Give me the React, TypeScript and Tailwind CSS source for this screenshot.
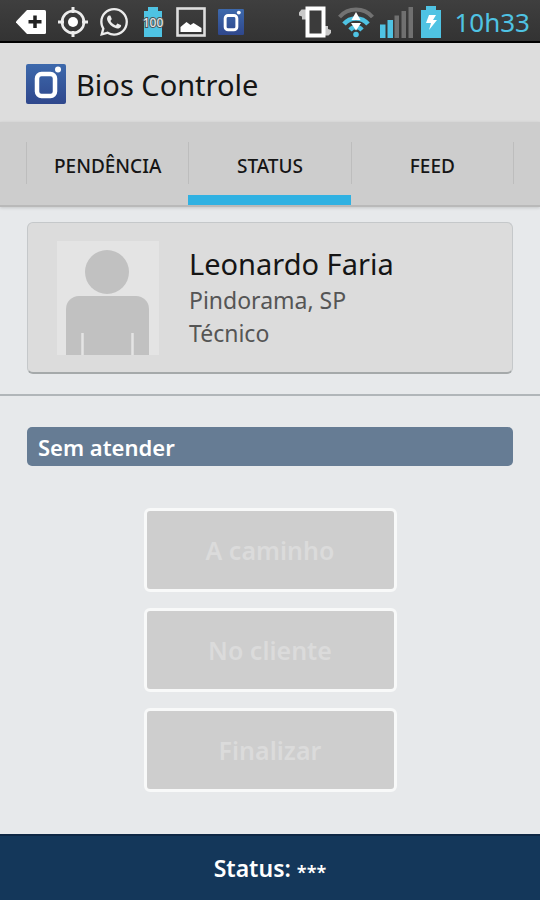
import React from "react";

function TagIcon() {
  return (
    <svg width="30" height="28" viewBox="0 0 30 28" aria-hidden="true">
      <path d="M11 2h17.500a1.500 1.500 0 0 1 1.500 1.500v21a1.500 1.500 0 0 1-1.500 1.500H11L0 14.500v-1z" fill="#fff" />
      <path d="M19 7.500v12.500M12.500 13.700h13" stroke="#222" strokeWidth="3.500" />
    </svg>
  );
}

function TargetIcon() {
  return (
    <svg width="30" height="32" viewBox="0 0 30 32" fill="none" stroke="#ececec" aria-hidden="true">
      <circle cx="15" cy="16" r="11" strokeWidth="2.600" />
      <circle cx="15" cy="16" r="5" fill="#fff" stroke="none" />
      <path d="M15 1v6M15 25v6M0 16h6M24 16h6" strokeWidth="3" />
    </svg>
  );
}

function ChatIcon() {
  return (
    <svg width="28" height="28" viewBox="0 0 24 24" aria-hidden="true">
      <path
        fill="#ececec"
        d="M17.472 14.382c-.297-.149-1.758-.867-2.030-.967-.273-.099-.471-.148-.670.150-.197.297-.767.966-.940 1.164-.173.199-.347.223-.644.075-.297-.150-1.255-.463-2.390-1.475-.883-.788-1.480-1.761-1.653-2.059-.173-.297-.018-.458.130-.606.134-.133.298-.347.446-.520.149-.174.198-.298.298-.497.099-.198.050-.371-.025-.520-.075-.149-.669-1.612-.916-2.207-.242-.579-.487-.500-.669-.510-.173-.008-.371-.010-.570-.010-.198 0-.520.074-.792.372-.272.297-1.040 1.016-1.040 2.479 0 1.462 1.065 2.875 1.213 3.074.149.198 2.096 3.200 5.077 4.487.709.306 1.262.489 1.694.625.712.227 1.360.195 1.871.118.571-.085 1.758-.719 2.006-1.413.248-.694.248-1.289.173-1.413-.074-.124-.272-.198-.570-.347m-5.421 7.403h-.004a9.870 9.870 0 0 1-5.031-1.378l-.361-.214-3.741.982.998-3.648-.235-.374a9.860 9.860 0 0 1-1.510-5.260c.001-5.450 4.436-9.884 9.888-9.884 2.640 0 5.122 1.030 6.988 2.898a9.825 9.825 0 0 1 2.893 6.994c-.003 5.450-4.437 9.884-9.885 9.884m8.413-18.297A11.815 11.815 0 0 0 12.050 0C5.495 0 .160 5.335.157 11.892c0 2.096.547 4.142 1.588 5.945L.057 24l6.305-1.654a11.882 11.882 0 0 0 5.683 1.448h.005c6.554 0 11.890-5.335 11.893-11.893a11.821 11.821 0 0 0-3.480-8.413Z"
      />
    </svg>
  );
}

function BatteryLevelIcon() {
  return (
    <svg width="22" height="32" viewBox="0 0 22 32" aria-hidden="true">
      <path d="M6 1h10v4h4v26H2V5h4z" fill="#4fc3e3" />
      <text x="11" y="21" textAnchor="middle" fontSize="12" fontWeight="500" fontFamily="Noto Sans, sans-serif" fill="#e4e4e4" stroke="#4a5558" strokeWidth="2" paintOrder="stroke">
        100
      </text>
    </svg>
  );
}

function PictureIcon() {
  return (
    <svg width="30" height="30" viewBox="0 0 30 30" aria-hidden="true">
      <rect x="1.500" y="1.500" width="27" height="27" fill="none" stroke="#dedede" strokeWidth="2.600" />
      <path d="M4.500 25v-5l6-5 4 3 3-2 8 5v4z" fill="#fff" />
    </svg>
  );
}

function AppLogo({ className }: { className: string }) {
  return (
    <svg className={className} viewBox="0 0 40 40" aria-hidden="true">
      <defs>
        <linearGradient id="logoBlue" x1="0" y1="0" x2="0" y2="1">
          <stop offset="0" stopColor="#3d69ac" />
          <stop offset="1" stopColor="#2f478c" />
        </linearGradient>
      </defs>
      <rect width="40" height="40" rx="2" fill="url(#logoBlue)" />
      <rect x="11" y="10" width="18" height="22" rx="4.500" fill="none" stroke="#fff" strokeWidth="4.500" />
      <circle cx="32" cy="5.500" r="3" fill="#fff" />
    </svg>
  );
}

function VibrateIcon() {
  return (
    <svg width="34" height="32" viewBox="0 0 34 32" aria-hidden="true">
      <path d="M8 3.500H3.500L1 6.500v3l3 1v3h4M26 20h4v3l3 1v3l-2.500 2.500H26" fill="#c9c9c9" />
      <rect x="9.500" y="2.500" width="16" height="27" fill="#3b3b3b" stroke="#fff" strokeWidth="4" />
    </svg>
  );
}

function WifiIcon() {
  return (
    <svg width="36" height="32" viewBox="0 0 36 32" fill="none" aria-hidden="true">
      <path d="M1.500 11C10 1 26 1 34.500 11" stroke="#727272" strokeWidth="4" />
      <path d="M6 18c6-7.500 18-7.500 24 0M12 24c3.500-4 8.500-4 12 0" stroke="#4fc3e3" strokeWidth="4.500" />
      <circle cx="18" cy="28.500" r="2.800" fill="#4fc3e3" />
      <path d="M18 6l4.500 8h-9zM18 24.500L13 17h10z" fill="#fff" />
    </svg>
  );
}

function SignalIcon() {
  return (
    <svg width="34" height="32" viewBox="0 0 34 32" aria-hidden="true">
      <path d="M0 18.500h5.500V32H0zM7.500 14H13v18H7.500z" fill="#4fc3e3" />
      <path d="M14.500 9.500H19V32h-4.500zM21.500 5H26v27h-4.500zM28.500 1H33v31h-4.500z" fill="#707070" />
    </svg>
  );
}

function ChargingIcon() {
  return (
    <svg width="22" height="32" viewBox="0 0 22 32" aria-hidden="true">
      <path d="M6 0h10v4h5v28H1V4h5z" fill="#4fc3e3" />
      <path d="M9 9h7l-3 5h4L9 24l2-7H6z" fill="#fff" />
    </svg>
  );
}

function Avatar() {
  return (
    <svg className="w-[102px] h-[114px] shrink-0" viewBox="0 0 102 114" role="img" aria-label="Leonardo Faria">
      <rect width="102" height="114" fill="#e4e4e4" />
      <circle cx="50" cy="31" r="22" fill="#c1c1c1" />
      <path d="M9 114V68a13 13 0 0 1 13-13h57a13 13 0 0 1 13 13v46z" fill="#c1c1c1" />
      <path d="M25.500 92v22M75.500 92v22" stroke="#e4e4e4" strokeWidth="2.500" />
    </svg>
  );
}

const tabs = ["PENDÊNCIA", "STATUS", "FEED"];
const actions = ["A caminho", "No cliente", "Finalizar"];

export default function App() {
  return (
    <div className="flex min-h-screen flex-col bg-[#e7e9eb] font-['Noto_Sans',sans-serif] text-[#151515]">
      <div className="flex h-[43px] items-center justify-between border-b-2 border-black bg-linear-to-b from-[#3f3f3f] to-[#333] pt-0.5 pr-2.5 pl-4">
        <div className="flex items-center gap-3">
          <TagIcon />
          <TargetIcon />
          <ChatIcon />
          <div className="flex items-center gap-3 pl-0.5">
            <BatteryLevelIcon />
            <PictureIcon />
            <AppLogo className="size-[26px]" />
          </div>
        </div>
        <div className="flex items-center gap-1.5">
          <VibrateIcon />
          <WifiIcon />
          <SignalIcon />
          <ChargingIcon />
          <time className="pl-1.5 text-[26px] leading-8 text-[#4fc3e3]">10h33</time>
        </div>
      </div>

      <header className="flex h-[79px] items-center gap-2.5 bg-[#dddddd] px-[26px] pt-0.5">
        <AppLogo className="size-10" />
        <h1 className="pt-0.5 text-[29px] leading-10">Bios Controle</h1>
      </header>

      <nav className="flex h-[85px] shrink-0 border-b-2 border-[#b9b9b9] bg-[#cdcdcd] px-[26px] shadow-[0_1px_3px_rgba(0,0,0,0.15)]" role="tablist">
        {tabs.map((tab) => {
          const active = tab === "STATUS";
          return (
            <button
              key={tab}
              type="button"
              role="tab"
              aria-selected={active}
              className="flex flex-1 flex-col text-[19px] leading-6 font-medium"
            >
              <span className="mt-5 mb-[11px] flex w-full flex-1 items-center justify-center border-l border-[#bdbdbd] pt-1.5">{tab}</span>
              <span className={active ? "h-2.5 w-full bg-[#2fb1e2]" : "h-2.5 w-full"} />
            </button>
          );
        })}
        <span className="mt-5 h-[42px] w-px bg-[#bdbdbd]" />
      </nav>

      <main className="flex flex-1 flex-col">
        <section className="border-b-2 border-[#b1b6b9] px-[27px] pt-[15px] pb-5">
          <div className="flex h-[152px] items-start gap-[30px] rounded-md border border-b-2 border-[#c5c8ca] border-b-[#a5a9aa] bg-[#dcdcdc] pt-[18px] pl-[29px]">
            <Avatar />
            <div className="pt-[3px]">
              <h2 className="text-[29px] leading-10">Leonardo Faria</h2>
              <p className="text-[23px] leading-[33px] text-[#555]">Pindorama, SP</p>
              <p className="text-[23px] leading-[33px] text-[#555]">Técnico</p>
            </div>
          </div>
        </section>

        <section className="px-[27px] pt-[31px]">
          <h3 className="rounded-[5px] bg-[#667c94] px-[11px] pt-1 pb-[3px] text-[22px] leading-8 font-semibold text-white">Sem atender</h3>
          <div className="mx-auto mt-[42px] flex w-[253px] flex-col gap-4">
            {actions.map((action) => (
              <button
                key={action}
                type="button"
                disabled
                className="h-[84px] rounded-md border-3 border-[#f8f9f9] bg-[#cecece] text-[25px] leading-8 font-semibold text-[#dbdbdb]"
              >
                {action}
              </button>
            ))}
          </div>
        </section>
      </main>

      <footer className="flex h-[66px] items-center justify-center gap-1.5 border-t-2 border-[#0e2744] bg-[#14375a] text-[23px] leading-8 font-semibold text-white">
        <span>Status:</span>
        <span className="pt-2 text-lg leading-8">***</span>
      </footer>
    </div>
  );
}
